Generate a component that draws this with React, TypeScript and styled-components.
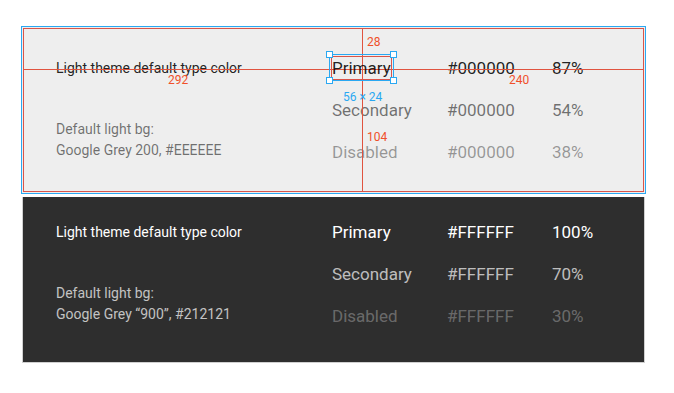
import styled, { createGlobalStyle, css } from "styled-components";

const GlobalStyle = createGlobalStyle`
  html, body {
    margin: 0;
    background: #ffffff;
    font-family: Roboto, "Noto Sans", Arial, sans-serif;
  }
`;

const Page = styled.div`
  padding: 26px 0 0 21px;
  width: 625px;
  display: flex;
  flex-direction: column;
  gap: 3px;
`;

const Panel = styled.div<{ dark?: boolean }>`
  position: relative;
  display: flex;
  ${(p) =>
    p.dark
      ? css`
          margin: 0 1px;
          padding: 14px 0 25px 33px;
          background: #2e2e2e;
          border: 1px solid #d0d0d0;
          border-top: none;
        `
      : css`
          padding: 20px 0 20px 34px;
          background: #eeeeee;
          border: 1px solid #2aa8f2;
          box-shadow: inset 0 0 0 1px #eeeeee, inset 0 0 0 2px #d9544a;
        `}
`;

const Describe = styled.div`
  width: 276px;
  display: flex;
  flex-direction: column;
  justify-content: space-between;
`;

const Heading = styled.div<{ dark?: boolean }>`
  height: 42px;
  display: flex;
  align-items: center;
  font-size: 14px;
  color: ${(p) => (p.dark ? "#ffffff" : "rgba(0,0,0,0.87)")};
`;

const Note = styled.div<{ dark?: boolean }>`
  margin-bottom: 12px;
  font-size: 14px;
  line-height: 21px;
  color: ${(p) => (p.dark ? "rgba(255,255,255,0.72)" : "rgba(0,0,0,0.54)")};
`;

const Table = styled.div`
  display: grid;
  grid-template-columns: 115px 105px 1fr;
  grid-auto-rows: 42px;
  align-items: center;
  flex: 1;
`;

const Cell = styled.div<{ tone: number; dark?: boolean }>`
  font-size: 17px;
  line-height: 24px;
  color: ${(p) =>
    p.dark ? `rgba(255,255,255,${p.tone})` : `rgba(0,0,0,${p.tone})`};
`;

const Selected = styled.span`
  position: relative;
  display: inline-block;
  box-shadow: inset 0 0 0 1px #d9544a;
  padding: 0 1px;
  margin-left: -1px;
  &::after {
    content: "";
    position: absolute;
    inset: -2px -2px -1px -2px;
    border: 1px solid #2aa8f2;
  }
`;

const Handle = styled.span<{ top?: boolean; left?: boolean }>`
  position: absolute;
  width: 5px;
  height: 5px;
  background: #ffffff;
  border: 1px solid #2aa8f2;
  z-index: 2;
  ${(p) => (p.top ? "top: -5px;" : "bottom: -4px;")}
  ${(p) => (p.left ? "left: -5px;" : "right: -5px;")}
`;

const GuideH = styled.div`
  position: absolute;
  left: 2px;
  right: 2px;
  top: 42px;
  height: 1px;
  background: #e0533f;
`;

const GuideV = styled.div`
  position: absolute;
  left: 340px;
  top: 2px;
  bottom: 1px;
  width: 1px;
  background: #e0533f;
`;

const Measure = styled.span<{ x: number; y: number; blue?: boolean }>`
  position: absolute;
  left: ${(p) => p.x}px;
  top: ${(p) => p.y}px;
  font-size: 12px;
  line-height: 13px;
  color: ${(p) => (p.blue ? "#2aa8f2" : "#f0502a")};
  white-space: nowrap;
`;

type Row = { name: string; hex: string; pct: string; tone: number };

const light: Row[] = [
  { name: "Primary", hex: "#000000", pct: "87%", tone: 0.87 },
  { name: "Secondary", hex: "#000000", pct: "54%", tone: 0.54 },
  { name: "Disabled", hex: "#000000", pct: "38%", tone: 0.38 },
];

const dark: Row[] = [
  { name: "Primary", hex: "#FFFFFF", pct: "100%", tone: 1 },
  { name: "Secondary", hex: "#FFFFFF", pct: "70%", tone: 0.7 },
  { name: "Disabled", hex: "#FFFFFF", pct: "30%", tone: 0.3 },
];

function TypeTable({ rows, dark, selectFirst }: { rows: Row[]; dark?: boolean; selectFirst?: boolean }) {
  return (
    <Table>
      {rows.map((r, i) => [
        <Cell key={"n" + i} dark={dark} tone={r.tone}>
          {selectFirst && i === 0 ? (
            <Selected>
              {r.name}
              <Handle top left />
              <Handle top />
              <Handle left />
              <Handle />
            </Selected>
          ) : (
            r.name
          )}
        </Cell>,
        <Cell key={"h" + i} dark={dark} tone={r.tone}>
          {r.hex}
        </Cell>,
        <Cell key={"p" + i} dark={dark} tone={r.tone}>
          {r.pct}
        </Cell>,
      ])}
    </Table>
  );
}

function App() {
  return (
    <>
      <GlobalStyle />
      <Page>
        <Panel>
          <GuideH />
          <GuideV />
          <Describe>
            <Heading>Light theme default type color</Heading>
            <Note>
              Default light bg:
              <br />
              Google Grey 200, #EEEEEE
            </Note>
          </Describe>
          <TypeTable rows={light} selectFirst />
          <Measure x={345} y={9}>28</Measure>
          <Measure x={146} y={47}>292</Measure>
          <Measure x={487} y={47}>240</Measure>
          <Measure blue x={321} y={64}>56 × 24</Measure>
          <Measure x={345} y={104}>104</Measure>
        </Panel>
        <Panel dark>
          <Describe>
            <Heading dark>Light theme default type color</Heading>
            <Note dark>
              Default light bg:
              <br />
              Google Grey “900”, #212121
            </Note>
          </Describe>
          <TypeTable rows={dark} dark />
        </Panel>
      </Page>
    </>
  );
}

export default App;
